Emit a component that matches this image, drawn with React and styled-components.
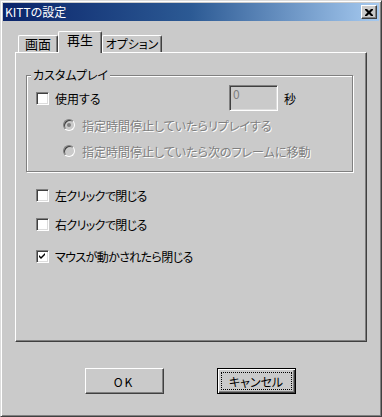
import styled, { createGlobalStyle } from 'styled-components'

const face = '#cacaca'
const shadow = '#808080'
const dark = '#404040'

const GlobalStyle = createGlobalStyle`
  html, body {
    margin: 0;
    padding: 0;
    background: ${face};
  }
  body {
    font-family: "Noto Sans CJK JP", "DejaVu Sans", sans-serif;
    font-size: 12px;
    font-feature-settings: "palt";
    color: #000;
  }
`

const Window = styled.div`
  box-sizing: border-box;
  width: 382px;
  height: 417px;
  padding: 2px;
  background: ${face};
  border: 1px solid;
  border-color: #dcdcdc ${dark} ${dark} #dcdcdc;
  box-shadow: inset 1px 1px 0 #fff, inset -1px -1px 0 ${shadow};
  display: flex;
  flex-direction: column;
`

const TitleBar = styled.div`
  height: 18px;
  display: flex;
  align-items: center;
  justify-content: space-between;
  padding: 0 2px;
  background: linear-gradient(90deg, #0a246a 0%, #2c5a94 50%, #a6caf0 100%);
`

const TitleText = styled.span`
  color: #fff;
  font-size: 12px;
  line-height: 18px;
`

const CloseButton = styled.div`
  box-sizing: border-box;
  width: 16px;
  height: 14px;
  display: flex;
  align-items: center;
  justify-content: center;
  background: ${face};
  border: 1px solid;
  border-color: #fff ${dark} ${dark} #fff;
  box-shadow: inset -1px -1px 0 ${shadow};
`

const Body = styled.div`
  flex: 1;
  display: flex;
  flex-direction: column;
  padding: 10px 12px 0;
`

const TabRow = styled.div`
  display: flex;
  align-items: flex-end;
  height: 21px;
  padding-left: 3px;
`

const Tab = styled.div`
  box-sizing: border-box;
  position: relative;
  width: ${({ $w }) => $w}px;
  height: ${({ $active }) => ($active ? 22 : 17)}px;
  margin-bottom: ${({ $active }) => ($active ? -1 : 0)}px;
  z-index: ${({ $active }) => ($active ? 2 : 1)};
  background: ${face};
  border-top: 1px solid #fff;
  border-left: 1px solid #fff;
  border-right: 1px solid ${dark};
  box-shadow: inset -1px 0 0 ${shadow};
  border-radius: 2px 2px 0 0;
  display: flex;
  justify-content: center;
  white-space: nowrap;
  padding-top: 1px;
  font-size: ${({ $big }) => ($big ? 13 : 12)}px;
  line-height: 14px;
`

const Panel = styled.div`
  box-sizing: border-box;
  width: 352px;
  height: 290px;
  border: 1px solid;
  border-color: #fff ${dark} ${dark} #fff;
  box-shadow: inset -1px -1px 0 ${shadow};
  padding: 22px 0 0 10px;
  display: flex;
  flex-direction: column;
`

const GroupBox = styled.div`
  box-sizing: border-box;
  position: relative;
  width: 327px;
  border: 1px solid ${shadow};
  box-shadow: 1px 1px 0 #fff, inset 1px 1px 0 #fff;
  padding: 9px 0 7px 9px;
  display: flex;
  flex-direction: column;
`

const Legend = styled.span`
  position: absolute;
  top: -9px;
  left: 4px;
  padding: 0 2px;
  background: ${face};
  line-height: 16px;
`

const Row = styled.div`
  display: flex;
  align-items: center;
  height: 26px;
  padding-left: ${({ $indent }) => $indent || 0}px;
  margin-top: ${({ $mt }) => $mt || 0}px;
`

const CheckLabel = styled.label`
  display: flex;
  align-items: center;
  gap: 6px;
  white-space: nowrap;
  letter-spacing: ${({ $tight }) => ($tight ? '-0.6px' : '0')};
  width: ${({ $w }) => ($w ? `${$w}px` : 'auto')};
`

const Box = styled.span`
  box-sizing: border-box;
  width: 13px;
  height: 13px;
  flex: none;
  background: #fff;
  border: 1px solid;
  border-color: ${shadow} #fff #fff ${shadow};
  box-shadow: inset 1px 1px 0 ${dark}, inset -1px -1px 0 #dcdcdc;
  display: flex;
  align-items: center;
  justify-content: center;
`

const NumberField = styled.div`
  box-sizing: border-box;
  width: 49px;
  height: 26px;
  border: 1px solid;
  border-color: ${shadow} #fff #fff ${shadow};
  box-shadow: inset 1px 1px 0 ${dark}, inset -1px -1px 0 #dcdcdc;
  padding: 1px 0 0 3px;
  color: ${shadow};
  font-size: 12px;
  line-height: 14px;
`

const Unit = styled.span`
  margin-left: 6px;
`

const Radio = styled.span`
  box-sizing: border-box;
  width: 12px;
  height: 12px;
  flex: none;
  border-radius: 50%;
  border: 1px solid;
  border-color: ${shadow} #fff #fff ${shadow};
  box-shadow: inset 1px 1px 0 ${dark};
  background: ${face};
  display: flex;
  align-items: center;
  justify-content: center;
  margin-right: 7px;
  &::after {
    content: '';
    width: 4px;
    height: 4px;
    border-radius: 50%;
    background: ${({ $checked }) => ($checked ? shadow : 'transparent')};
  }
`

const Disabled = styled.span`
  color: ${shadow};
  white-space: nowrap;
  text-shadow: 1px 1px 0 #fff;
`

const CheckList = styled.div`
  display: flex;
  flex-direction: column;
  margin-left: 10px;
`

const CheckRow = styled.div`
  display: flex;
  align-items: center;
  height: 20px;
  margin-top: ${({ $mt }) => $mt}px;
`

const ButtonRow = styled.div`
  display: flex;
  justify-content: center;
  gap: 53px;
  margin-top: 26px;
  padding-right: 2px;
`

const Button = styled.div`
  box-sizing: border-box;
  width: 79px;
  height: 26px;
  position: relative;
  display: flex;
  align-items: center;
  justify-content: center;
  background: ${face};
  border: 1px solid;
  border-color: ${({ $default }) =>
    $default ? '#000' : `#fff ${dark} ${dark} #fff`};
  box-shadow: ${({ $default }) =>
    $default
      ? `inset 1px 1px 0 #fff, inset -1px -1px 0 ${dark}, inset -2px -2px 0 ${shadow}`
      : `inset -1px -1px 0 ${shadow}`};
  letter-spacing: ${({ $spaced }) => ($spaced ? '2px' : '0')};
  &::after {
    content: '';
    display: ${({ $default }) => ($default ? 'block' : 'none')};
    position: absolute;
    inset: 3px;
    border: 1px dotted #000;
  }
`

function Check({ checked }) {
  return (
    <Box>
      {checked && (
        <svg width="7" height="7" viewBox="0 0 7 7">
          <path d="M0 2 L2 4 L6 0 L6 2 L2 6 L0 4 Z" fill="#000" />
        </svg>
      )}
    </Box>
  )
}

const closeOptions = [
  { label: '左クリックで閉じる', checked: false, mt: 13 },
  { label: '右クリックで閉じる', checked: false, mt: 9 },
  { label: 'マウスが動かされたら閉じる', checked: true, mt: 12 },
]

export default function App() {
  return (
    <>
      <GlobalStyle />
      <Window>
        <TitleBar>
          <TitleText>KITTの設定</TitleText>
          <CloseButton>
            <svg width="8" height="7" viewBox="0 0 8 7">
              <path
                d="M0 0h2l2 2l2-2h2v1l-2.5 2.5L8 6v1H6L4 5L2 7H0V6l2.5-2.5L0 1z"
                fill="#000"
              />
            </svg>
          </CloseButton>
        </TitleBar>
        <Body>
          <TabRow>
            <Tab $w={40} $big>画面</Tab>
            <Tab $w={44} $active $big>再生</Tab>
            <Tab $w={60}>オプション</Tab>
          </TabRow>
          <Panel>
            <GroupBox>
              <Legend>カスタムプレイ</Legend>
              <Row>
                <CheckLabel $w={193}>
                  <Check checked={false} />
                  使用する
                </CheckLabel>
                <NumberField>0</NumberField>
                <Unit>秒</Unit>
              </Row>
              <Row $indent={27} $mt={1}>
                <Radio $checked />
                <Disabled>指定時間停止していたらリプレイする</Disabled>
              </Row>
              <Row $indent={27}>
                <Radio />
                <Disabled>指定時間停止していたら次のフレームに移動</Disabled>
              </Row>
            </GroupBox>
            <CheckList>
              {closeOptions.map((opt) => (
                <CheckRow key={opt.label} $mt={opt.mt}>
                  <CheckLabel $tight>
                    <Check checked={opt.checked} />
                    {opt.label}
                  </CheckLabel>
                </CheckRow>
              ))}
            </CheckList>
          </Panel>
          <ButtonRow>
            <Button $spaced>OK</Button>
            <Button $default>キャンセル</Button>
          </ButtonRow>
        </Body>
      </Window>
    </>
  )
}
